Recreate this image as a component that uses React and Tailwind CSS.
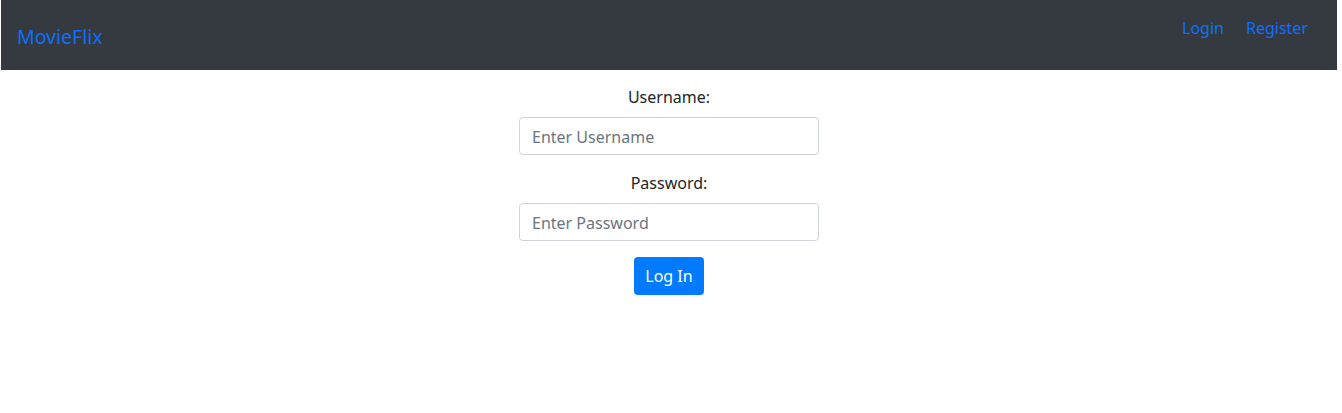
import React, { useState } from "react";

const App = () => {
  const [username, setUsername] = useState("");
  const [password, setPassword] = useState("");

  return (
    <div
      className="ml-[1px] w-[1336px] min-h-[413px] bg-white text-[#212529]"
      style={{ fontFamily: '"Noto Sans", "Open Sans", sans-serif' }}
    >
      <nav className="h-[70px] bg-[#343a40] flex items-start justify-between pl-[16px] pr-[29px]">
        <a href="#" className="mt-[22px] text-[19.5px] leading-[30px] text-[#0d6efd]">
          MovieFlix
        </a>
        <div className="flex gap-[22px] mt-[16px]">
          <a href="#" className="text-[16px] leading-[24px] text-[#0d6efd]">
            Login
          </a>
          <a href="#" className="text-[16px] leading-[24px] text-[#0d6efd]">
            Register
          </a>
        </div>
      </nav>

      <form className="flex flex-col items-center pt-[15px]">
        <label className="text-[16px] leading-[24px] mb-[8px]">Username:</label>
        <input
          type="text"
          value={username}
          onChange={(e) => setUsername(e.target.value)}
          placeholder="Enter Username"
          className="w-[300px] h-[38px] px-[12px] pt-[2px] border border-[#ced4da] rounded-[4px] text-[16px] placeholder:text-[#6c757d] focus:outline-none"
        />
        <label className="text-[16px] leading-[24px] mt-[16px] mb-[8px]">Password:</label>
        <input
          type="password"
          value={password}
          onChange={(e) => setPassword(e.target.value)}
          placeholder="Enter Password"
          className="w-[300px] h-[38px] px-[12px] pt-[2px] border border-[#ced4da] rounded-[4px] text-[16px] placeholder:text-[#6c757d] focus:outline-none"
        />
        <button
          type="submit"
          onClick={(e) => e.preventDefault()}
          className="mt-[16px] w-[70px] h-[38px] bg-[#007bff] text-white text-[16px] rounded-[4px]"
        >
          Log In
        </button>
      </form>
    </div>
  );
};

export default App;
